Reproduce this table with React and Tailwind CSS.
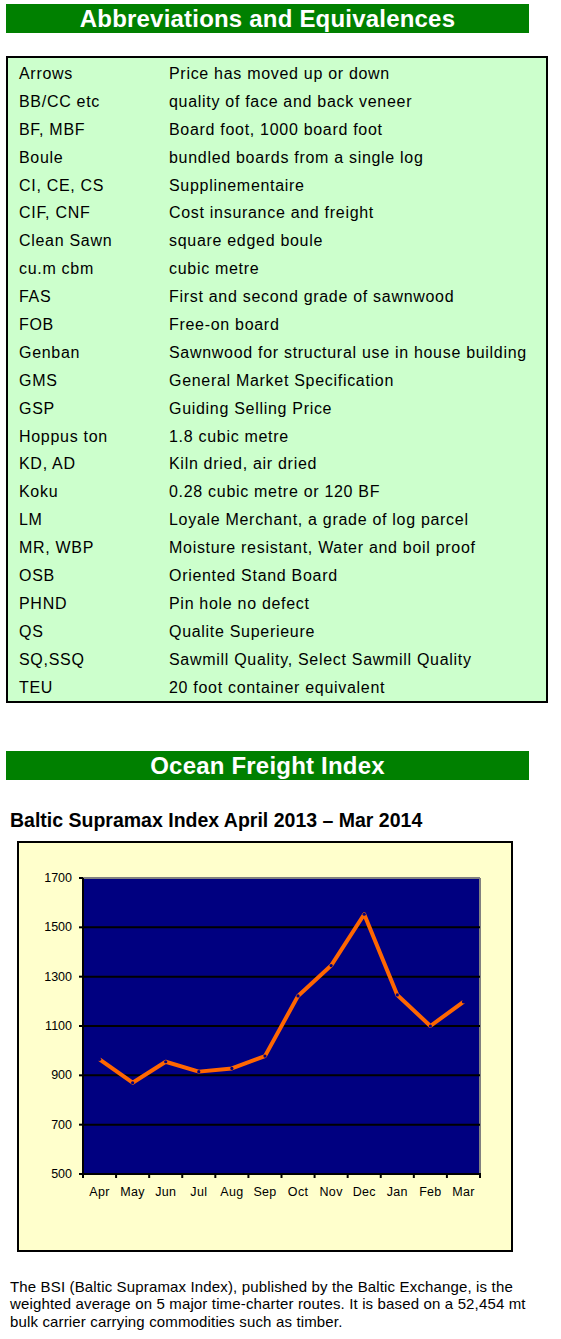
const rows = [
  ["Arrows", "Price has moved up or down"],
  ["BB/CC etc", "quality of face and back veneer"],
  ["BF, MBF", "Board foot, 1000 board foot"],
  ["Boule", "bundled boards from a single log"],
  ["CI, CE, CS", "Supplinementaire"],
  ["CIF, CNF", "Cost insurance and freight"],
  ["Clean Sawn", "square edged boule"],
  ["cu.m cbm", "cubic metre"],
  ["FAS", "First and second grade of sawnwood"],
  ["FOB", "Free-on board"],
  ["Genban", "Sawnwood for structural use in house building"],
  ["GMS", "General Market Specification"],
  ["GSP", "Guiding Selling Price"],
  ["Hoppus ton", "1.8 cubic metre"],
  ["KD, AD", "Kiln dried, air dried"],
  ["Koku", "0.28 cubic metre or 120 BF"],
  ["LM", "Loyale Merchant, a grade of log parcel"],
  ["MR, WBP", "Moisture resistant, Water and boil proof"],
  ["OSB", "Oriented Stand Board"],
  ["PHND", "Pin hole no defect"],
  ["QS", "Qualite Superieure"],
  ["SQ,SSQ", "Sawmill Quality, Select Sawmill Quality"],
  ["TEU", "20 foot container equivalent"],
];

const bsi = [
  ["Apr", 965],
  ["May", 870],
  ["Jun", 955],
  ["Jul", 915],
  ["Aug", 928],
  ["Sep", 978],
  ["Oct", 1222],
  ["Nov", 1345],
  ["Dec", 1553],
  ["Jan", 1226],
  ["Feb", 1100],
  ["Mar", 1198],
];

// plot area in page coordinates
const PX = 83;
const PY = 878;
const PW = 397;
const PH = 296;
const step = PW / bsi.length;
const yOf = (v) => PY + ((1700 - v) / 1200) * PH;

const SectionBar = ({ title }) => (
  <div className="ml-[6px] w-[523px] h-[29px] bg-[#008000] flex items-center justify-center">
    <h2 className="text-white font-bold text-[24px] leading-none tracking-[0.2px]">
      {title}
    </h2>
  </div>
);

const Chart = () => {
  const pts = bsi.map(([, v], i) => [PX + step * (i + 0.5), yOf(v)]);
  return (
    <div className="ml-[17px] w-[496px] h-[411px] border-2 border-black bg-[#ffffcc]">
      <svg width="492" height="407" viewBox="19 843 492 407">
        <rect x={PX} y={PY} width={PW} height={PH} fill="#000080" />
        <line x1={PX} y1={PY} x2={PX + PW} y2={PY} stroke="#808080" strokeWidth="2" />
        <line x1={PX + PW} y1={PY} x2={PX + PW} y2={PY + PH} stroke="#808080" strokeWidth="2" />
        {[1500, 1300, 1100, 900, 700].map((v) => (
          <line key={v} x1={PX} y1={yOf(v)} x2={PX + PW} y2={yOf(v)} stroke="#000" strokeWidth="2" />
        ))}
        <line x1={PX} y1={PY} x2={PX} y2={PY + PH + 4} stroke="#000" strokeWidth="2" />
        <line x1={PX - 4} y1={PY + PH} x2={PX + PW + 1} y2={PY + PH} stroke="#000" strokeWidth="2" />
        {[1700, 1500, 1300, 1100, 900, 700, 500].map((v) => (
          <g key={v}>
            <line x1={PX - 4} y1={yOf(v)} x2={PX} y2={yOf(v)} stroke="#000" strokeWidth="2" />
            <text x="72" y={yOf(v) + 4} textAnchor="end" fontSize="12.5" fill="#000" fontFamily="'Liberation Sans', Arial, sans-serif">
              {v}
            </text>
          </g>
        ))}
        {bsi.map(([m], i) => (
          <g key={m}>
            <line x1={PX + step * (i + 1)} y1={PY + PH} x2={PX + step * (i + 1)} y2={PY + PH + 4} stroke="#000" strokeWidth="2" />
            <text x={PX + step * (i + 0.5)} y="1196" textAnchor="middle" fontSize="12.5" letterSpacing="0.3" fill="#000" fontFamily="'Liberation Sans', Arial, sans-serif">
              {m}
            </text>
          </g>
        ))}
        <polyline
          points={pts.map((p) => p.join(",")).join(" ")}
          fill="none"
          stroke="#ff6600"
          strokeWidth="4"
          strokeLinejoin="round"
        />
        {pts.map(([x, y], i) => (
          <circle key={i} cx={x} cy={y} r="1.6" fill="#000080" />
        ))}
      </svg>
    </div>
  );
};

export default function App() {
  return (
    <div className="w-[561px] min-h-[1339px] bg-white pt-[4px] pb-[8px] font-['Liberation_Sans',Arial,sans-serif] text-black">
      <SectionBar title="Abbreviations and Equivalences" />

      <div className="mt-[23px] ml-[6px] w-[542px] border-2 border-black bg-[#ccffcc] pt-[2px]">
        {rows.map(([abbr, meaning]) => (
          <div key={abbr} className="h-[27.9px] flex items-center text-[16px] tracking-[0.7px] leading-none">
            <span className="w-[161px] pl-[11px] shrink-0">{abbr}</span>
            <span>{meaning}</span>
          </div>
        ))}
      </div>

      <div className="mt-[48px]">
        <SectionBar title="Ocean Freight Index" />
      </div>

      <h3 className="mt-[31px] ml-[10px] text-[19.5px] font-bold leading-none">
        Baltic Supramax Index April 2013 – Mar 2014
      </h3>

      <div className="mt-[10px]">
        <Chart />
      </div>

      <p className="mt-[26px] ml-[10px] w-[548px] text-[15px] tracking-[0.15px] leading-[17.5px]">
        The BSI (Baltic Supramax Index), published by the Baltic Exchange, is the
        <br />
        weighted average on 5 major time-charter routes. It is based on a 52,454 mt
        <br />
        bulk carrier carrying commodities such as timber.
      </p>
    </div>
  );
}
